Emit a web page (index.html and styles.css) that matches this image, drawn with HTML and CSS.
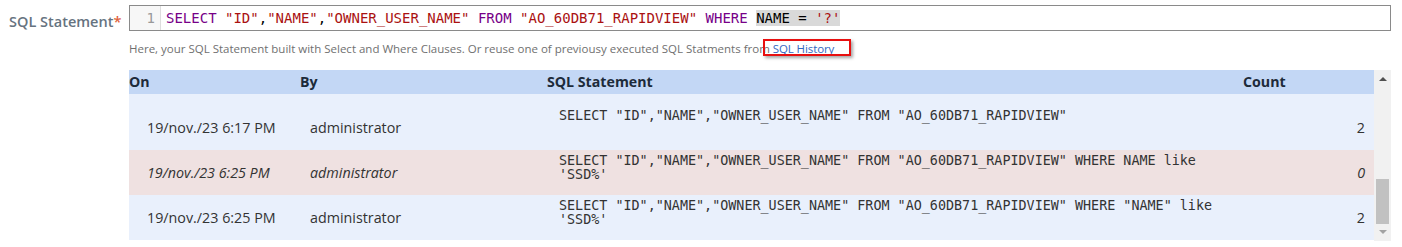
FILE: index.html
```html
<!DOCTYPE html>
<html lang="en">
<head>
    <meta charset="UTF-8">
    <meta name="viewport" content="width=device-width, initial-scale=1.0">
    <title>SQL Statement</title>
    <link rel="stylesheet" href="styles.css">
</head>
<body>
    <div class="field">
        <label class="fieldLabel">SQL Statement<span class="required">*</span></label>
        <div class="fieldBody">
            <div class="editor">
                <div class="gutter">1</div>
                <div class="code"><span class="kw">SELECT</span> <span class="str">"ID"</span>,<span class="str">"NAME"</span>,<span class="str">"OWNER_USER_NAME"</span> <span class="kw">FROM</span> <span class="str">"AO_60DB71_RAPIDVIEW"</span> <span class="kw">WHERE</span> <span class="selected">NAME = <span class="str">'?'</span></span></div>
            </div>

            <div class="help">
                Here, your SQL Statement built with Select and Where Clauses. Or reuse one of previousy executed SQL Statments from
                <span class="linkWrap"><a href="#" class="historyLink">SQL History</a><span class="callout"></span></span>
            </div>

            <div class="history">
                <div class="historyTable">
                    <div class="row head">
                        <div class="cell on">On</div>
                        <div class="cell by">By</div>
                        <div class="cell sql">SQL Statement</div>
                        <div class="cell count">Count</div>
                    </div>
                    <div class="row first">
                        <div class="cell on">19/nov./23 6:17 PM</div>
                        <div class="cell by">administrator</div>
                        <div class="cell sql">SELECT "ID","NAME","OWNER_USER_NAME" FROM "AO_60DB71_RAPIDVIEW"</div>
                        <div class="cell count">2</div>
                    </div>
                    <div class="row failed">
                        <div class="cell on">19/nov./23 6:25 PM</div>
                        <div class="cell by">administrator</div>
                        <div class="cell sql">SELECT "ID","NAME","OWNER_USER_NAME" FROM "AO_60DB71_RAPIDVIEW" WHERE NAME like 'SSD%'</div>
                        <div class="cell count">0</div>
                    </div>
                    <div class="row">
                        <div class="cell on">19/nov./23 6:25 PM</div>
                        <div class="cell by">administrator</div>
                        <div class="cell sql">SELECT "ID","NAME","OWNER_USER_NAME" FROM "AO_60DB71_RAPIDVIEW" WHERE "NAME" like 'SSD%'</div>
                        <div class="cell count">2</div>
                    </div>
                </div>
                <div class="scrollbar">
                    <div class="arrow up"></div>
                    <div class="track"><div class="thumb"></div></div>
                    <div class="arrow down"></div>
                </div>
            </div>
        </div>
    </div>
</body>
</html>
```

FILE: styles.css
```css
body {
    margin: 0;
    background-color: #fff;
    font-family: 'Open Sans', 'Noto Sans', sans-serif;
    color: #333;
}

.field {
    display: flex;
    padding-top: 5px;
}

.fieldLabel {
    width: 120px;
    padding-left: 9px;
    padding-top: 7px;
    font-size: 14.5px;
    font-weight: 600;
    color: #66737f;
    line-height: 20px;
}

.required {
    color: #e0623d;
}

.fieldBody {
    width: 1262px;
}

.editor {
    display: flex;
    height: 26px;
    box-sizing: border-box;
    border: 1px solid #8a8a8a;
}

.gutter {
    width: 25px;
    padding-right: 5px;
    text-align: right;
    background-color: #f7f7f7;
    border-right: 1px solid #ddd;
    font-family: 'DejaVu Sans Mono', monospace;
    font-size: 14px;
    line-height: 24px;
    color: #999;
}

.code {
    padding-left: 5px;
    font-family: 'DejaVu Sans Mono', monospace;
    font-size: 14px;
    line-height: 24px;
    color: #000;
    white-space: pre;
}

.kw {
    color: #708;
}

.str {
    color: #a11;
}

.selected {
    background-color: #d9d9d9;
}

.help {
    margin: 10px 0 13px;
    font-size: 11.5px;
    line-height: 16px;
    color: #707070;
}

.linkWrap {
    position: relative;
}

.historyLink {
    color: #3467c0;
    text-decoration: none;
    letter-spacing: -0.1px;
}

.callout {
    position: absolute;
    left: -10px;
    top: -2px;
    width: 84px;
    height: 13px;
    border: 2px solid #e81010;
    box-shadow: 2px 2px 3px rgba(0, 0, 0, 0.35);
}

.history {
    display: flex;
    height: 171px;
    overflow: hidden;
}

.historyTable {
    flex: 1;
    font-size: 14.3px;
}

.row {
    display: grid;
    grid-template-columns: 171px 247px 696px 1fr;
    height: 45px;
    background-color: #e9f0fc;
    color: #333;
}

.row.first {
    height: 56px;
    padding-top: 11px;
    box-sizing: border-box;
}

.row.failed {
    background-color: #efe1e1;
    font-style: italic;
}

.row.head {
    height: 24px;
    background-color: #c3d7f5;
    font-weight: 700;
    color: #1d2b3a;
}

.cell {
    display: flex;
    align-items: center;
}

.row .on {
    padding-left: 18px;
}

.row .by {
    padding-left: 10px;
}

.row .sql {
    align-items: flex-start;
    padding: 4px 0 0 12px;
    font-family: 'DejaVu Sans Mono', monospace;
    font-size: 13.4px;
    line-height: 14px;
    font-style: normal;
}

.row .count {
    justify-content: flex-end;
    padding-right: 9px;
}

.row.head .cell {
    align-items: center;
    padding: 0 0 1px;
    font-family: 'Open Sans', 'Noto Sans', sans-serif;
    font-size: 14.2px;
}

.row.head .count {
    justify-content: flex-start;
}

.scrollbar {
    width: 17px;
    background-color: #f1f1f1;
    display: flex;
    flex-direction: column;
    align-items: center;
}

.arrow {
    width: 0;
    height: 0;
    border-left: 4px solid transparent;
    border-right: 4px solid transparent;
    margin: 7px 0;
}

.arrow.up {
    border-bottom: 4px solid #505050;
}

.arrow.down {
    border-top: 4px solid #a3a3a3;
}

.track {
    flex: 1;
    width: 100%;
    position: relative;
}

.thumb {
    position: absolute;
    left: 2px;
    right: 2px;
    top: 91px;
    height: 45px;
    background-color: #c1c1c1;
}
```
